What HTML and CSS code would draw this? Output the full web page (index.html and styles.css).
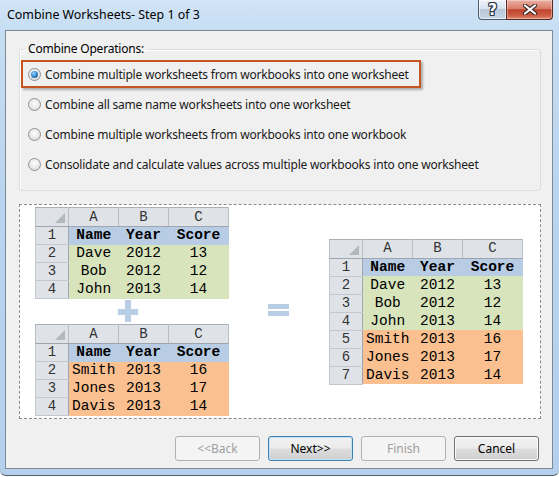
FILE: index.html
```html
<!DOCTYPE html>
<html>
<head>
<meta charset="utf-8">
<title>Combine Worksheets</title>
<link rel="stylesheet" href="styles.css">
</head>
<body>
<div class="window">
  <div class="titlebar">
    <div class="title">Combine Worksheets- Step 1 of 3</div>
    <div class="caption-buttons">
      <div class="cap-btn help"><span class="help-glyph">?</span></div>
      <div class="cap-btn close">
        <svg width="16" height="11" viewBox="0 0 16 11">
          <path d="M3 1.5 L13 9.5 M13 1.5 L3 9.5" stroke="#3b2a2a" stroke-width="4.2" stroke-linecap="round" fill="none"/>
          <path d="M3 1.5 L13 9.5 M13 1.5 L3 9.5" stroke="#ffffff" stroke-width="2.2" stroke-linecap="round" fill="none"/>
        </svg>
      </div>
    </div>
  </div>
  <div class="client">
    <fieldset class="group">
      <legend>Combine Operations:</legend>
      <div class="option selected"><span class="radio checked"></span><span>Combine multiple worksheets from workbooks into one worksheet</span></div>
      <div class="option"><span class="radio"></span><span>Combine all same name worksheets into one worksheet</span></div>
      <div class="option"><span class="radio"></span><span>Combine multiple worksheets from workbooks into one workbook</span></div>
      <div class="option"><span class="radio"></span><span>Consolidate and calculate values across multiple workbooks into one worksheet</span></div>
    </fieldset>
    <div class="preview">
      <div class="left-col">
        <table class="sheet">
          <colgroup><col class="c-rh"><col class="c-a"><col class="c-b"><col class="c-c"></colgroup>
          <tr class="hdr"><th class="corner"><span class="tri"></span></th><th>A</th><th>B</th><th>C</th></tr>
          <tr><th>1</th><td class="blue b">Name</td><td class="blue b">Year</td><td class="blue b">Score</td></tr>
          <tr><th>2</th><td class="green">Dave</td><td class="green">2012</td><td class="green">13</td></tr>
          <tr><th>3</th><td class="green">Bob</td><td class="green">2012</td><td class="green">12</td></tr>
          <tr><th>4</th><td class="green">John</td><td class="green">2013</td><td class="green">14</td></tr>
        </table>
        <svg class="plus" width="20" height="22" viewBox="0 0 20 22">
          <rect x="0" y="9" width="20" height="6" fill="#b9cde5"/>
          <rect x="7" y="0" width="6" height="22" fill="#b9cde5"/>
        </svg>
        <table class="sheet">
          <colgroup><col class="c-rh"><col class="c-a"><col class="c-b"><col class="c-c"></colgroup>
          <tr class="hdr"><th class="corner"><span class="tri"></span></th><th>A</th><th>B</th><th>C</th></tr>
          <tr><th>1</th><td class="blue b">Name</td><td class="blue b">Year</td><td class="blue b">Score</td></tr>
          <tr><th>2</th><td class="orange">Smith</td><td class="orange">2013</td><td class="orange">16</td></tr>
          <tr><th>3</th><td class="orange">Jones</td><td class="orange">2013</td><td class="orange">17</td></tr>
          <tr><th>4</th><td class="orange">Davis</td><td class="orange">2013</td><td class="orange">14</td></tr>
        </table>
      </div>
      <svg class="equals" width="21" height="12" viewBox="0 0 21 12">
        <rect x="0" y="0" width="21" height="5" fill="#b9cde5"/>
        <rect x="0" y="7" width="21" height="5" fill="#b9cde5"/>
      </svg>
      <table class="sheet result">
        <colgroup><col class="c-rh"><col class="c-a"><col class="c-b"><col class="c-c"></colgroup>
        <tr class="hdr"><th class="corner"><span class="tri"></span></th><th>A</th><th>B</th><th>C</th></tr>
        <tr><th>1</th><td class="blue b">Name</td><td class="blue b">Year</td><td class="blue b">Score</td></tr>
        <tr><th>2</th><td class="green">Dave</td><td class="green">2012</td><td class="green">13</td></tr>
        <tr><th>3</th><td class="green">Bob</td><td class="green">2012</td><td class="green">12</td></tr>
        <tr><th>4</th><td class="green">John</td><td class="green">2013</td><td class="green">14</td></tr>
        <tr><th>5</th><td class="orange">Smith</td><td class="orange">2013</td><td class="orange">16</td></tr>
        <tr><th>6</th><td class="orange">Jones</td><td class="orange">2013</td><td class="orange">17</td></tr>
        <tr><th>7</th><td class="orange">Davis</td><td class="orange">2013</td><td class="orange">14</td></tr>
      </table>
    </div>
    <div class="buttons">
      <button class="btn" disabled>&lt;&lt;Back</button>
      <button class="btn default">Next&gt;&gt;</button>
      <button class="btn" disabled>Finish</button>
      <button class="btn">Cancel</button>
    </div>
  </div>
</div>
</body>
</html>
```
FILE: styles.css
```css
* { box-sizing: border-box; }
html, body {
  margin: 0;
  padding: 0;
  width: 559px;
  height: 477px;
  overflow: hidden;
  background: #ffffff;
}
body {
  font-family: "Noto Sans", "Open Sans", sans-serif;
  font-size: 12px;
  color: #000;
}
.window {
  width: 559px;
  height: 476px;
  background: linear-gradient(180deg, #d2e5f7 0px, #c6ddf3 30px, #b9d4ee 200px, #b4d0ec 100%);
  border-bottom: 1px solid #4d5d6e;
  border-radius: 0 0 6px 6px;
  display: flex;
  flex-direction: column;
}
.titlebar {
  height: 30px;
  display: flex;
  justify-content: space-between;
  align-items: flex-start;
}
.title {
  margin: 6px 0 0 7px;
  line-height: 17px;
  font-size: 12.4px;
  color: #000;
  white-space: nowrap;
}
.caption-buttons {
  display: flex;
  margin-right: 6px;
}
.cap-btn {
  height: 20px;
  display: flex;
  align-items: center;
  justify-content: center;
  border: 1px solid #4c5a6a;
  border-top: none;
}
.help {
  width: 28px;
  border-right: none;
  border-radius: 0 0 0 4px;
  background: linear-gradient(180deg, #edf2f8 0%, #d9e3ee 45%, #b8c8d9 50%, #c6d6e6 100%);
  box-shadow: inset 0 0 0 1px rgba(255,255,255,0.6);
}
.help-glyph {
  font-family: "DejaVu Sans", sans-serif;
  font-weight: bold;
  font-size: 15px;
  line-height: 18px;
  color: #fff;
  text-shadow: 1px 0 0 #2c3846, -1px 0 0 #2c3846, 0 1px 0 #2c3846, 0 -1px 0 #2c3846, 1px 1px 0 #2c3846, -1px -1px 0 #2c3846, 1px -1px 0 #2c3846, -1px 1px 0 #2c3846;
}
.close {
  width: 47px;
  border-color: #5a2a22;
  border-radius: 0 0 4px 0;
  background: linear-gradient(180deg, #eab1a4 0%, #d97d69 45%, #c0432c 52%, #cc5a42 80%, #e08a6f 100%);
  box-shadow: inset 0 0 0 1px rgba(255,255,255,0.35);
}
.close svg { display: block; }

.client {
  margin: 0 6px 0 5px;
  height: 439px;
  border: 1px solid #7d8a98;
  background: #f0f0f0;
  padding: 10px 11px 0 13px;
  display: flex;
  flex-direction: column;
  letter-spacing: -0.2px;
}
.group {
  margin: 0;
  padding: 2px 0 11px 0;
  min-width: 0;
  border: 1px solid #d5dfe5;
  border-radius: 3px;
  box-shadow: inset 1px 1px 0 #ffffff;
}
.group legend {
  margin-left: 5px;
  padding: 0 3px;
  line-height: 16px;
  color: #000;
}
.option {
  height: 30px;
  display: flex;
  align-items: center;
  padding-left: 8px;
  gap: 4px;
  color: #1a1a1a;
  white-space: nowrap;
}
.option.selected {
  height: 28px;
  width: 400px;
  margin: 1px 0 1px 1px;
  padding-left: 5px;
  border: 2px solid #c5541f;
  box-shadow: 2px 2px 2px rgba(0,0,0,0.28);
}
.radio {
  width: 13px;
  height: 13px;
  border-radius: 50%;
  border: 1px solid #8d9196;
  background: radial-gradient(circle at 50% 40%, #fdfdfd 0%, #eaeaea 50%, #cfd0d2 100%);
  flex: none;
  display: flex;
  align-items: center;
  justify-content: center;
}
.radio.checked::after {
  content: "";
  width: 7px;
  height: 7px;
  border-radius: 50%;
  background: radial-gradient(circle at 40% 35%, #a6e0ff 0%, #3d93d8 40%, #10466f 100%);
}

.preview {
  margin-top: 13px;
  height: 215px;
  border: 1px dashed #8a8a8a;
  background: #ffffff;
  display: flex;
  align-items: center;
  letter-spacing: 0;
}
.left-col {
  margin-left: 15px;
  display: flex;
  flex-direction: column;
}
.plus {
  display: block;
  margin: 1px 0 2px 83px;
}
.equals {
  display: block;
  margin-left: 39px;
  margin-top: -3px;
}
.result { margin-left: 40px; }

.sheet {
  border-collapse: collapse;
  table-layout: fixed;
  width: 193px;
  font-family: "Liberation Mono", "DejaVu Sans Mono", monospace;
  font-size: 14.5px;
}
.c-rh { width: 33px; }
.c-a { width: 50px; }
.c-b { width: 50px; }
.c-c { width: 60px; }
.sheet td, .sheet th {
  padding: 0;
  height: 18px;
  line-height: 17px;
  text-align: center;
  white-space: nowrap;
  overflow: hidden;
}
.sheet th {
  background: #dfe3e8;
  font-weight: normal;
  color: #333;
  border: 1px solid #c3c8ce;
  border-right: 1px solid #9ea5ae;
  font-size: 14px;
}
.sheet .hdr th {
  height: 19px;
  border: 1px solid #b9bec5;
  border-bottom: 1px solid #9ea5ae;
  border-top: 1px solid #a9afb7;
}
.sheet .hdr th.corner {
  position: relative;
  border-right: 1px solid #b9bec5;
}
.tri {
  position: absolute;
  right: 3px;
  bottom: 3px;
  width: 0;
  height: 0;
  border-left: 10px solid transparent;
  border-bottom: 10px solid #b3b8be;
}
.sheet td { color: #000; }
.blue { background: #b8cce4; }
.green { background: #d8e4bc; }
.orange { background: #fac090; }
.b { font-weight: bold; }

.buttons {
  margin-top: 17px;
  display: flex;
  justify-content: flex-end;
  gap: 8px;
  padding-right: 2px;
}
.btn {
  width: 85px;
  height: 25px;
  font-family: "Noto Sans", "Open Sans", sans-serif;
  font-size: 12px;
  letter-spacing: 0;
  color: #000;
  border: 1px solid #707070;
  border-radius: 3px;
  background: linear-gradient(180deg, #f2f2f2 0%, #ebebeb 48%, #dddddd 52%, #cfcfcf 100%);
  box-shadow: inset 0 0 0 1px #fbfbfb;
  padding: 0;
}
.btn.default {
  border-color: #3c7fb1;
  box-shadow: inset 0 0 0 1px #c5e3f6;
}
.btn:disabled {
  color: #a0a0a0;
  border-color: #adb2b5;
  background: #f4f4f4;
  box-shadow: none;
}
```
